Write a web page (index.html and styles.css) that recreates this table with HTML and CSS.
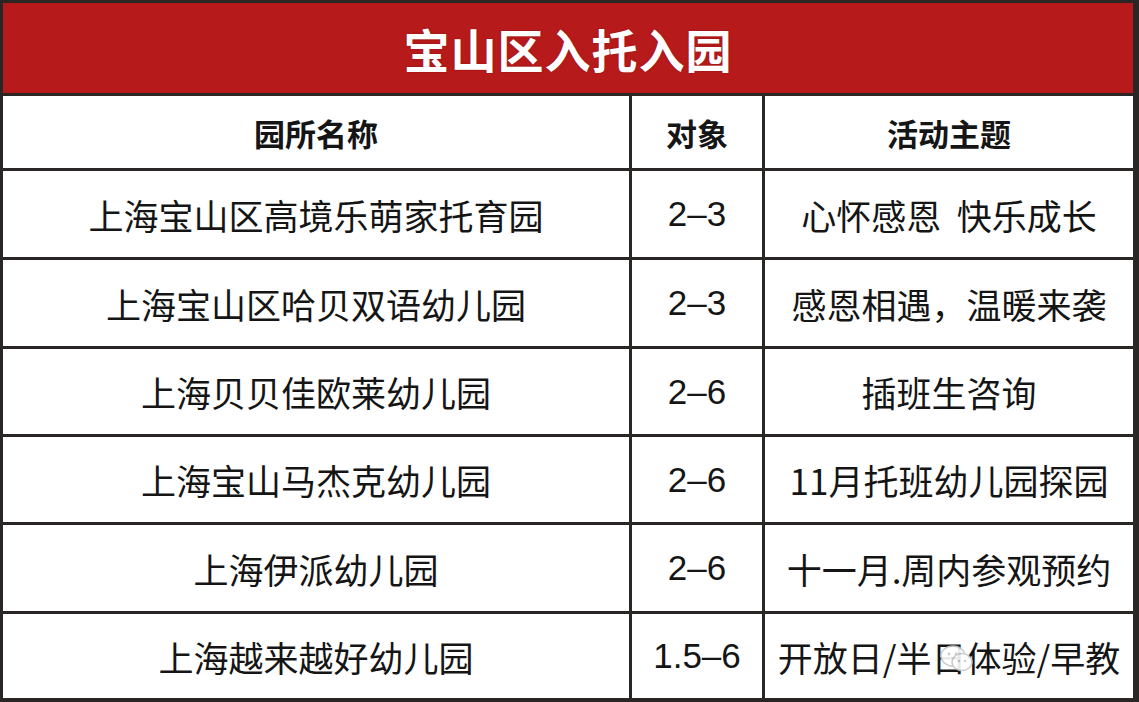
FILE: index.html
```html
<!DOCTYPE html>
<html lang="zh">
<head>
<meta charset="utf-8">
<title>宝山区入托入园</title>
<link rel="stylesheet" href="styles.css">
</head>
<body>
<div class="page">
  <div class="sheet">
    <div class="title">宝山区入托入园</div>

    <div class="cell head">园所名称</div>
    <div class="cell head">对象</div>
    <div class="cell head">活动主题</div>

    <div class="cell">上海宝山区高境乐萌家托育园</div>
    <div class="cell num">2–3</div>
    <div class="cell">心怀感恩&nbsp;&nbsp;快乐成长</div>

    <div class="cell">上海宝山区哈贝双语幼儿园</div>
    <div class="cell num">2–3</div>
    <div class="cell">感恩相遇，温暖来袭</div>

    <div class="cell">上海贝贝佳欧莱幼儿园</div>
    <div class="cell num">2–6</div>
    <div class="cell">插班生咨询</div>

    <div class="cell">上海宝山马杰克幼儿园</div>
    <div class="cell num">2–6</div>
    <div class="cell">11月托班幼儿园探园</div>

    <div class="cell">上海伊派幼儿园</div>
    <div class="cell num">2–6</div>
    <div class="cell">十一月.周内参观预约</div>

    <div class="cell">上海越来越好幼儿园</div>
    <div class="cell num">1.5–6</div>
    <div class="cell">开放日/半日体验/早教</div>
  </div>

  <svg class="wm-icon" width="34" height="30" viewBox="0 0 34 30" aria-hidden="true">
    <ellipse cx="13" cy="12" rx="12" ry="10" fill="#fff" stroke="#c8c8c8" stroke-width="1.5"/>
    <ellipse cx="22" cy="18" rx="10" ry="8.5" fill="#fff" stroke="#c8c8c8" stroke-width="1.5"/>
    <circle cx="9" cy="10" r="1.4" fill="#c8c8c8"/>
    <circle cx="16" cy="10" r="1.4" fill="#c8c8c8"/>
    <circle cx="19" cy="17" r="1.2" fill="#c8c8c8"/>
    <circle cx="25" cy="17" r="1.2" fill="#c8c8c8"/>
  </svg>
</div>
</body>
</html>
```

FILE: styles.css
```css
html, body {
  margin: 0;
  padding: 0;
  background: #ffffff;
}

.page {
  position: relative;
  width: 1139px;
  height: 702px;
  overflow: hidden;
}

.sheet {
  box-sizing: border-box;
  width: 1139px;
  height: 702px;
  background: #2a2626;
  border-style: solid;
  border-color: #2a2626;
  border-width: 3px 6px 4px 3px;
  display: grid;
  grid-template-columns: 626px 130px 368px;
  grid-template-rows: 90px 72px 86px 86px 85px 85px 86px 84px;
  gap: 3px;
  font-family: "Noto Sans CJK SC", "Liberation Sans", sans-serif;
  color: #151515;
}

.title {
  grid-column: 1 / 4;
  background: #b71a1a;
  color: #ffffff;
  font-size: 46px;
  font-weight: 700;
  letter-spacing: 1px;
  display: flex;
  align-items: center;
  justify-content: center;
  text-shadow: 0 0 2px rgba(80, 0, 0, 0.4);
}

.cell {
  background: #ffffff;
  display: flex;
  align-items: center;
  justify-content: center;
  font-size: 35px;
  white-space: nowrap;
}

.cell.head {
  font-size: 31px;
  font-weight: 700;
}

.cell.num {
  font-family: "Liberation Sans", "Noto Sans CJK SC", sans-serif;
  font-size: 35px;
}

.wm-icon {
  position: absolute;
  left: 940px;
  top: 644px;
  display: block;
  opacity: 0.9;
}
```
